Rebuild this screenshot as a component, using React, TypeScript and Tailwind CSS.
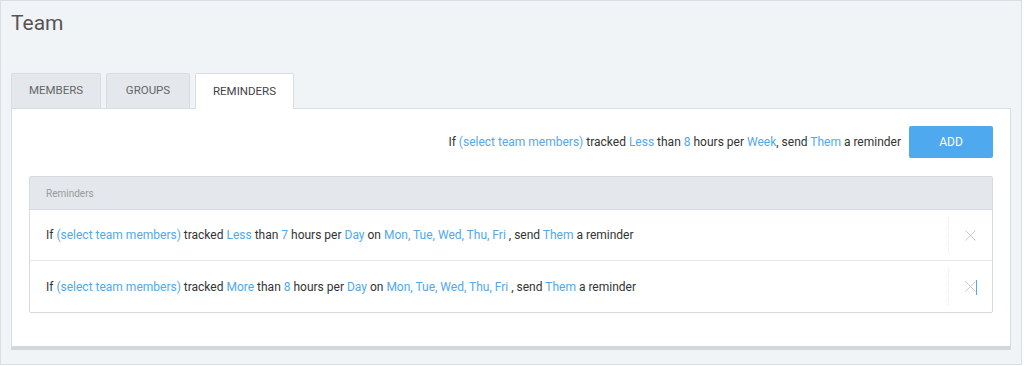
import { X } from 'lucide-react'

const B = ({ children }: { children: React.ReactNode }) => (
  <span className="text-[#52a8ec]">{children}</span>
)

function Sentence({ op, hours, per, days }: { op: string; hours: string; per: string; days?: string }) {
  return (
    <span className="whitespace-pre">
      If <B>(select team members)</B> tracked <B>{op}</B> than <B>{hours}</B> hours per <B>{per}</B>
      {days ? <> on <B>{days}</B> , send </> : <>, send </>}
      <B>Them</B> a reminder
    </span>
  )
}

const ROWS = [
  { op: 'Less', hours: '7', caret: false },
  { op: 'More', hours: '8', caret: true },
]

export default function App() {
  return (
    <div className="w-[1024px] h-[366px] bg-white font-['Roboto',sans-serif]">
      <div className="w-[1022px] h-[365px] bg-[#f1f4f7] border border-[#d9dee4] px-[10px]">
        <h1 className="text-[21px] text-[#555] pt-[9px] leading-[26px]">Team</h1>

        <div className="flex mt-[37px] items-end">
          <div className="w-[90px] h-[35px] flex items-center justify-center text-[11.5px] text-[#666] bg-[#e4e8ec] border border-[#d8dde3] border-b-0 rounded-t-[2px]">
            MEMBERS
          </div>
          <div className="ml-[5px] w-[84px] h-[35px] flex items-center justify-center text-[11.5px] text-[#666] bg-[#e4e8ec] border border-[#d8dde3] border-b-0 rounded-t-[2px]">
            GROUPS
          </div>
          <div className="ml-[5px] w-[99px] h-[36px] flex items-center justify-center text-[11.5px] text-[#444] bg-white border border-[#d8dde3] border-b-0 rounded-t-[2px] -mb-px relative z-10">
            REMINDERS
          </div>
        </div>

        <div className="bg-white border border-[#d8dde3] border-b-[4px] border-b-[#d2d7dc] h-[242px] px-[17px]">
          <div className="flex justify-end items-center gap-[8px] pt-[17px] text-[12px] text-[#333]">
            <Sentence op="Less" hours="8" per="Week" />
            <button className="w-[84px] h-[32px] bg-[#4fa9ee] text-white text-[12px] rounded-[2px]">ADD</button>
          </div>

          <div className="mt-[18px] border border-[#d6dbe0] rounded-[2px]">
            <div className="h-[33px] bg-[#e4e8ec] border-b border-[#d6dbe0] flex items-center px-[16px] text-[10px] text-[#9a9a9a]">
              Reminders
            </div>
            {ROWS.map((r, i) => (
              <div key={i} className={`h-[51px] flex items-center ${i === 0 ? 'border-b border-[#e3e7eb]' : ''}`}>
                <div className="flex-1 px-[16px] text-[12px] text-[#333]">
                  <Sentence op={r.op} hours={r.hours} per="Day" days="Mon, Tue, Wed, Thu, Fri" />
                </div>
                <div className="w-[44px] h-[36px] border-l border-dotted border-[#e6e9ec] flex items-center justify-center relative">
                  <X className="w-[19px] h-[19px] text-[#b8bcc0]" strokeWidth={1} />
                  {r.caret && <span className="absolute left-[27px] top-[11px] w-px h-[15px] bg-[#52a8ec]" />}
                </div>
              </div>
            ))}
          </div>
        </div>
      </div>
    </div>
  )
}
